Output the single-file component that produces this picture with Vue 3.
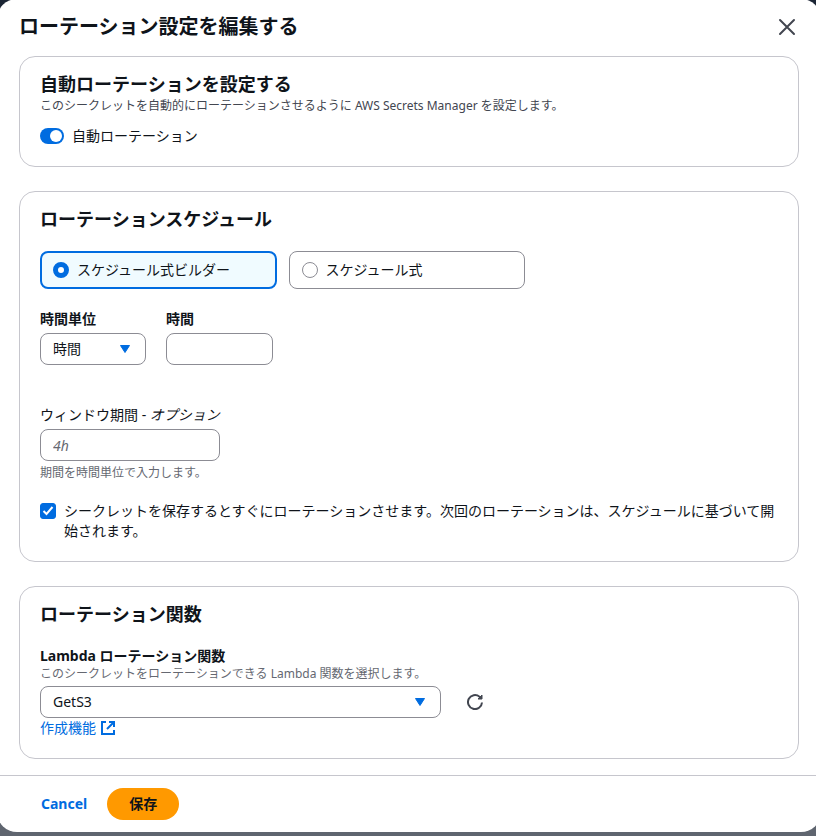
<script setup>
import { ref } from 'vue'

const autoRotation = ref(true)
const mode = ref('builder')
const unit = ref('時間')
const hours = ref('')
const duration = ref('')
const rotateNow = ref(true)
const fn = ref('GetS3')

const modes = [
  { value: 'builder', label: 'スケジュール式ビルダー' },
  { value: 'expression', label: 'スケジュール式' },
]
const units = ['時間', '日', '週', '月']
</script>

<template>
  <div class="backdrop">
    <form class="modal" role="dialog" aria-labelledby="modal-title" @submit.prevent>
      <header class="modal-header">
        <h1 id="modal-title">ローテーション設定を編集する</h1>
        <button type="button" class="icon-button" aria-label="閉じる">
          <svg class="icon" viewBox="0 0 18 18" width="18" height="18">
            <path class="cross" d="M2 2l14 14M16 2L2 16" />
          </svg>
        </button>
      </header>

      <div class="modal-body">
        <section class="card">
          <h2>自動ローテーションを設定する</h2>
          <p class="description">このシークレットを自動的にローテーションさせるように AWS Secrets Manager を設定します。</p>
          <label class="toggle-row">
            <input v-model="autoRotation" class="toggle" type="checkbox" role="switch" />
            <span>自動ローテーション</span>
          </label>
        </section>

        <section class="card">
          <h2>ローテーションスケジュール</h2>
          <div class="tiles" role="radiogroup">
            <label v-for="m in modes" :key="m.value" class="tile" :class="{ selected: mode === m.value }">
              <input v-model="mode" class="radio" type="radio" name="mode" :value="m.value" />
              <span>{{ m.label }}</span>
            </label>
          </div>

          <div class="unit-row">
            <div class="field">
              <label class="label" for="unit">時間単位</label>
              <div class="select">
                <select id="unit" v-model="unit">
                  <option v-for="u in units" :key="u">{{ u }}</option>
                </select>
                <svg class="caret" viewBox="0 0 12 10" width="12" height="10"><path d="M1.5 1.5h9L6 8.500z" /></svg>
              </div>
            </div>
            <div class="field">
              <label class="label" for="hours">時間</label>
              <input id="hours" v-model="hours" class="input" type="text" />
            </div>
          </div>

          <div class="field duration">
            <label class="label plain" for="duration">ウィンドウ期間 - <i>オプション</i></label>
            <input id="duration" v-model="duration" class="input" type="text" placeholder="4h" />
            <p class="hint">期間を時間単位で入力します。</p>
          </div>

          <label class="check-row">
            <span class="check-box">
              <input v-model="rotateNow" class="check" type="checkbox" />
              <svg class="check-mark" viewBox="0 0 16 16" width="16" height="16"><path d="M3.500 8l3 3 6-7" /></svg>
            </span>
            <span>シークレットを保存するとすぐにローテーションさせます。次回のローテーションは、スケジュールに基づいて開始されます。</span>
          </label>
        </section>

        <section class="card">
          <h2>ローテーション関数</h2>
          <div class="function-field">
            <label class="label" for="fn">Lambda ローテーション関数</label>
            <p class="hint">このシークレットをローテーションできる Lambda 関数を選択します。</p>
            <div class="function-row">
              <div class="select">
                <select id="fn" v-model="fn">
                  <option>GetS3</option>
                </select>
                <svg class="caret" viewBox="0 0 12 10" width="12" height="10"><path d="M1.5 1.5h9L6 8.500z" /></svg>
              </div>
              <button type="button" class="icon-button" aria-label="更新">
                <svg class="icon thick" viewBox="0 0 16 16" width="16" height="16">
                  <path d="M15 8.500A7 7 0 1 1 12.500 2.700L14 4" />
                  <path class="arrow-head" d="M11 5h4V1z" />
                </svg>
              </button>
            </div>
            <a class="link" href="#">
              <span>作成機能</span>
              <svg class="icon thick" viewBox="0 0 16 16" width="16" height="16">
                <path d="M6 2H2v12h12v-4" />
                <path d="M9 2h5v5M14 2L7 9" />
              </svg>
            </a>
          </div>
        </section>
      </div>

      <footer class="modal-footer">
        <button type="button" class="btn">Cancel</button>
        <button type="submit" class="btn primary">保存</button>
      </footer>
    </form>
  </div>
</template>

<style>
html {
  background: #5f656f;
}
</style>

<style scoped>
.backdrop {
  overflow: hidden;
  padding-bottom: 4px;
  background: linear-gradient(#1b2534 50%, #5f656f 50%);
  color: #0f141a;
  font: 14px/20px "Noto Sans", "Noto Sans CJK JP", sans-serif;
}
.backdrop * {
  box-sizing: border-box;
}
.modal {
  margin: -1px -5px 0 -3px;
  border-radius: 20px;
  background: #fff;
}
.modal-header {
  display: flex;
  align-items: center;
  justify-content: space-between;
  padding: 16px 25px 17px 22px;
}
h1,
h2,
p {
  margin: 0;
}
h1 {
  font-size: 20px;
  line-height: 24px;
}
h2 {
  font-size: 18px;
  line-height: 22px;
}
.modal-body {
  display: grid;
  gap: 24px;
  padding: 0 22px 16px;
}
.card {
  padding: 16px 20px 20px;
  border: 1px solid #c6c6cd;
  border-radius: 16px;
}
.description {
  color: #424650;
  font-size: 12px;
  line-height: 22px;
}
.hint {
  color: #656871;
  font-size: 12px;
  line-height: 16px;
}
input,
select,
button {
  margin: 0;
  color: inherit;
  font: inherit;
}
.toggle-row {
  display: flex;
  align-items: center;
  gap: 8px;
  margin-top: 9px;
}
.toggle {
  display: flex;
  appearance: none;
  width: 24px;
  height: 16px;
  padding: 2px;
  border-radius: 8px;
  background: #8c8c94;
}
.toggle::before {
  content: "";
  width: 12px;
  height: 12px;
  border-radius: 50%;
  background: #fff;
}
.toggle:checked {
  justify-content: flex-end;
  background: #006ce0;
}
.tiles {
  display: grid;
  grid-template-columns: 1fr 1fr;
  gap: 12px;
  max-width: 485px;
  margin-top: 21px;
}
.tile {
  display: flex;
  align-items: center;
  gap: 8px;
  height: 38px;
  padding: 0 12px;
  border: 1px solid #8c8c94;
  border-radius: 8px;
}
.tile.selected {
  padding: 0 11px;
  border: 2px solid #006ce0;
  background: #f0fbff;
}
.radio {
  appearance: none;
  width: 16px;
  height: 16px;
  border: 1px solid #8c8c94;
  border-radius: 50%;
  background: #fff;
}
.radio:checked {
  border: 5px solid #006ce0;
}
.unit-row {
  display: grid;
  grid-template-columns: 106px 107px;
  gap: 20px;
  margin-top: 20px;
}
.field {
  display: grid;
  gap: 4px;
}
.label {
  font-weight: 700;
}
.plain {
  font-weight: 400;
}
.input,
.select select {
  display: block;
  appearance: none;
  width: 100%;
  height: 32px;
  padding: 0 12px;
  border: 1px solid #8c8c94;
  border-radius: 8px;
  background: #fff;
}
.input::placeholder {
  color: #656871;
  font-style: italic;
  opacity: 1;
}
.select {
  position: relative;
}
.caret {
  position: absolute;
  top: 11px;
  right: 15px;
  fill: #006ce0;
  stroke: #006ce0;
  stroke-linejoin: round;
  pointer-events: none;
}
.duration {
  max-width: 180px;
  margin-top: 40px;
  white-space: nowrap;
}
.check-row {
  display: flex;
  gap: 8px;
  margin-top: 20px;
}
.check-box {
  position: relative;
  flex: none;
  width: 16px;
  height: 16px;
  margin-top: 2px;
}
.check {
  display: block;
  appearance: none;
  width: 16px;
  height: 16px;
  border: 1px solid #8c8c94;
  border-radius: 3px;
}
.check:checked {
  border-color: #006ce0;
  background: #006ce0;
}
.check-mark {
  position: absolute;
  inset: 0;
  fill: none;
  stroke: #fff;
  stroke-width: 2;
  pointer-events: none;
}
.function-field {
  margin-top: 21px;
}
.function-field .label {
  display: block;
}
.function-row {
  display: grid;
  grid-template-columns: 401px auto;
  justify-content: start;
  align-items: center;
  gap: 26px;
  margin-top: 4px;
}
.icon-button {
  display: flex;
  padding: 0;
  border: 0;
  background: none;
  color: #424650;
}
.icon {
  fill: none;
  stroke: currentColor;
}
.cross {
  stroke-width: 2;
  stroke-linecap: round;
}
.thick {
  stroke-width: 2;
}
.arrow-head {
  fill: currentColor;
  stroke-width: 1;
}
.link {
  display: flex;
  align-items: center;
  gap: 4px;
  width: fit-content;
  color: #006ce0;
  text-decoration: none;
}
.modal-footer {
  display: flex;
  padding: 12px 23px;
  border-top: 1px solid #c6c6cd;
}
.btn {
  height: 32px;
  padding: 0 20px 0 21px;
  border: 0;
  border-radius: 16px;
  background: none;
  color: #006ce0;
  font-weight: 700;
}
.primary {
  padding: 0 22px;
  background: #ff9900;
  color: #0f141a;
}
</style>
